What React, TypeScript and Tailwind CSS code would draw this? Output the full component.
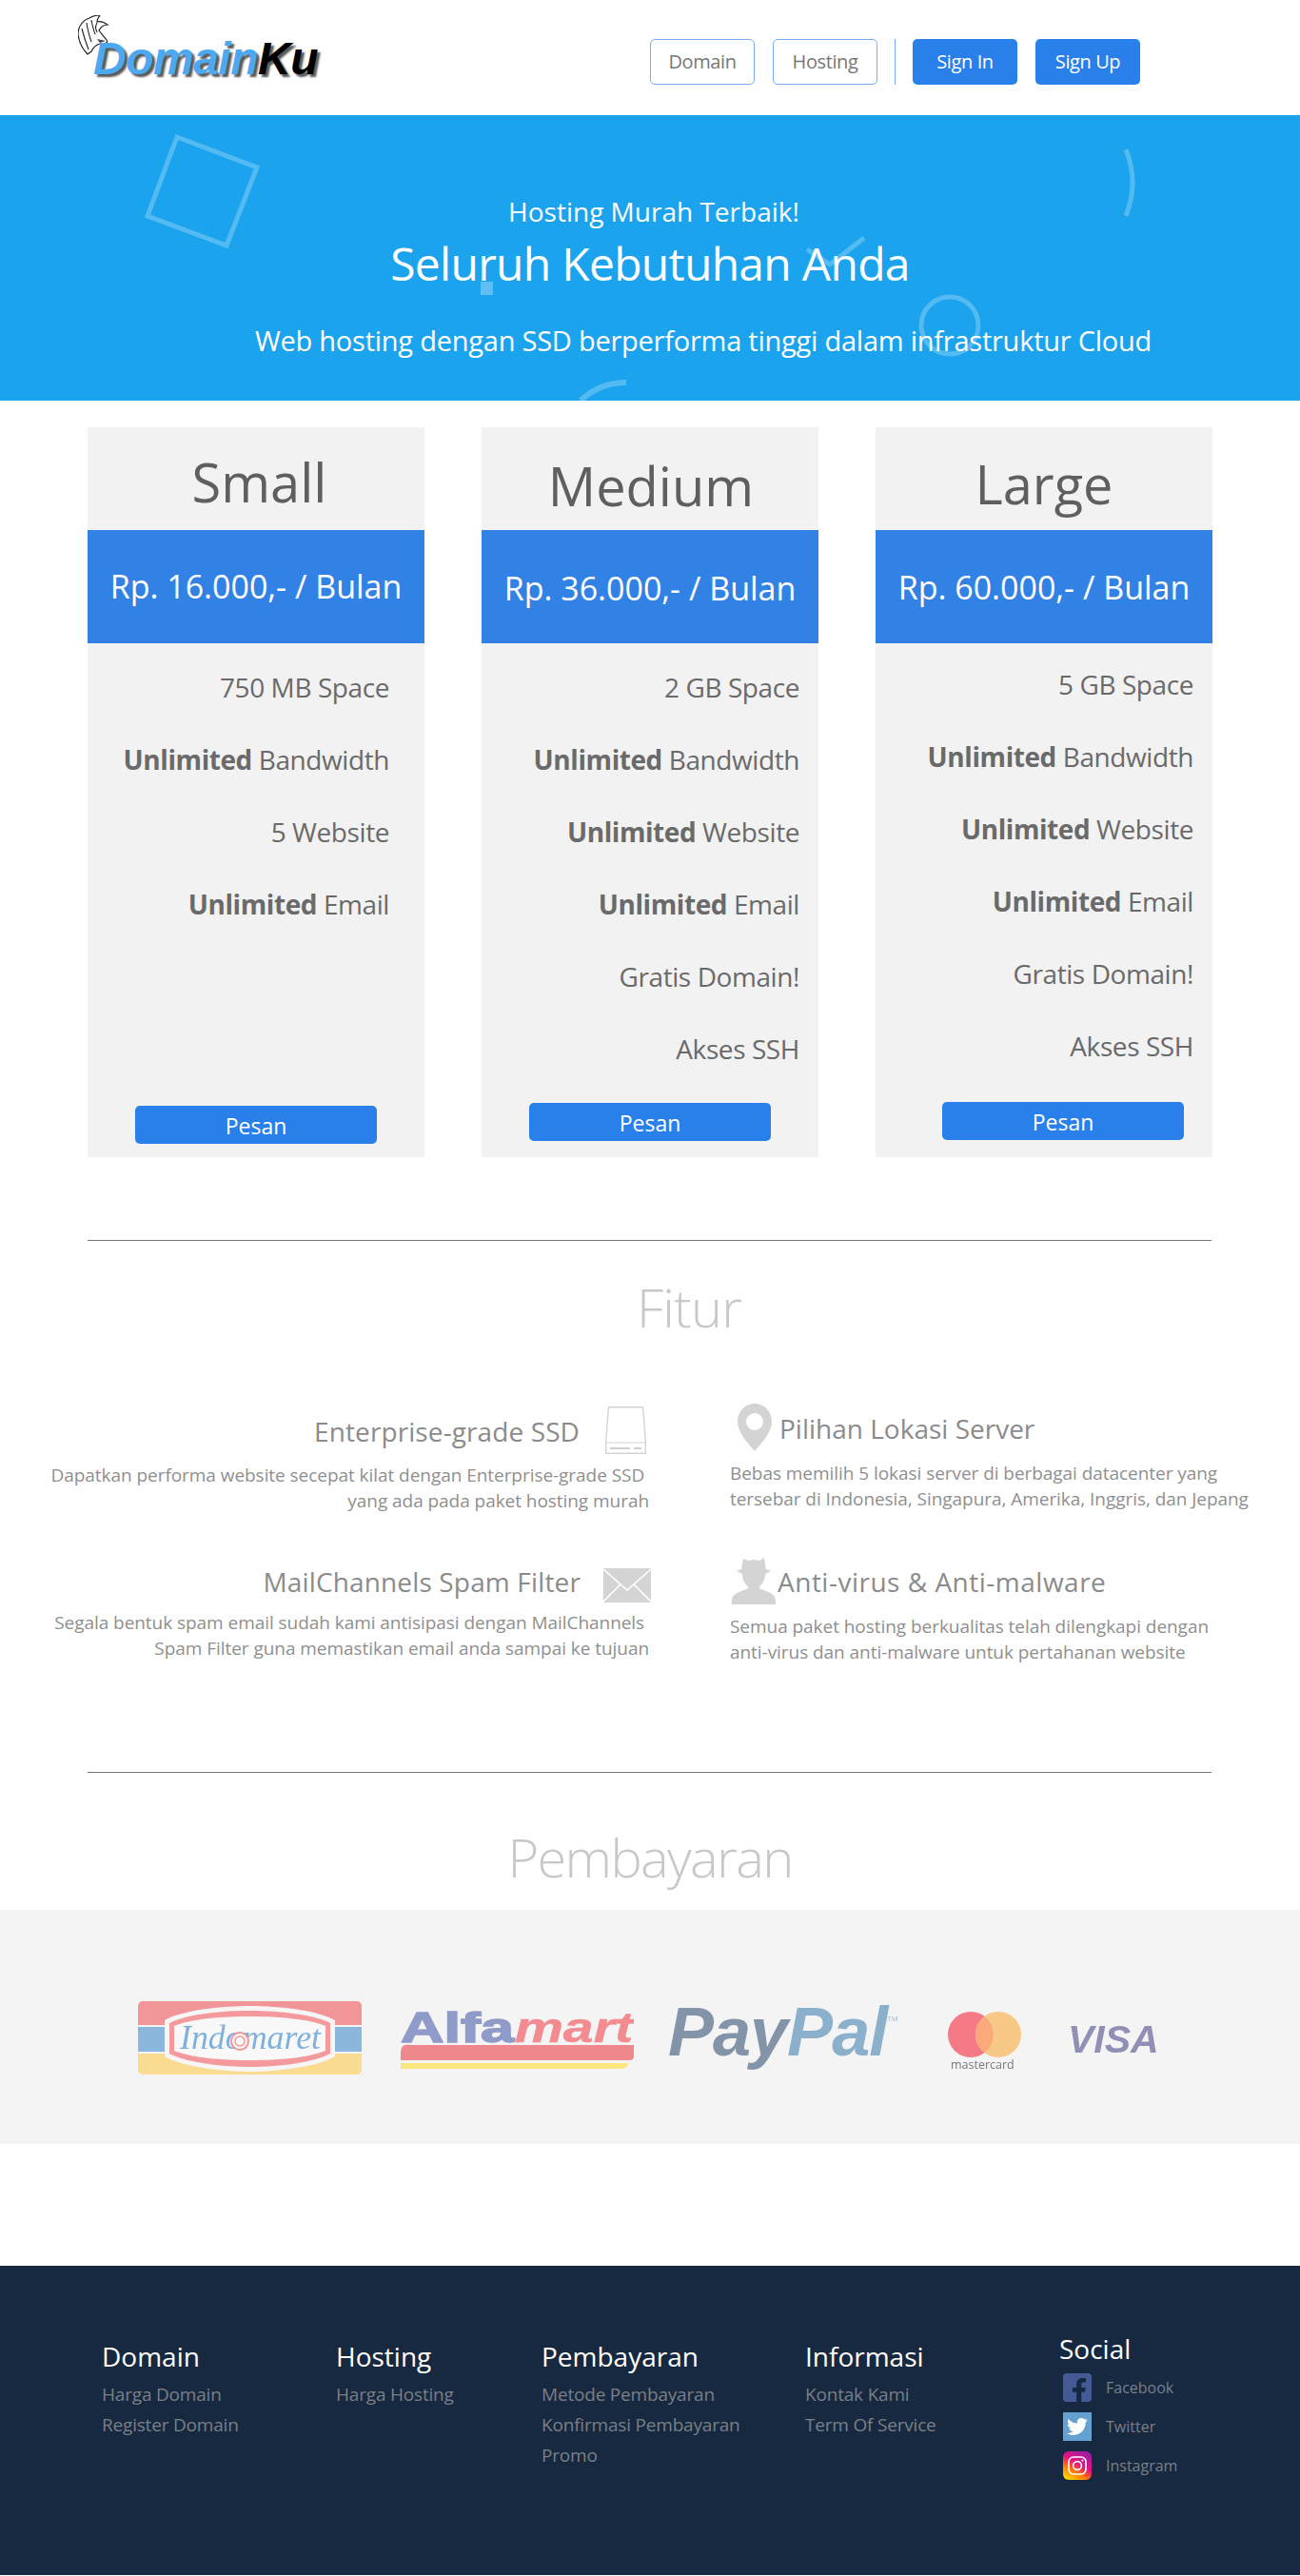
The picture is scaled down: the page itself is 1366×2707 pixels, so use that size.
import React from "react";
import { FaTwitter, FaFacebookF } from "react-icons/fa";

const btnOutline = "w-[110px] h-[48px] rounded-[5px] border border-[#78abf0] bg-white text-[#777777] text-[20px] tracking-[-0.02em] flex items-center justify-center";
const btnSolid = "w-[110px] h-[48px] rounded-[5px] bg-[#2a80ea] text-white text-[20px] tracking-[-0.02em] flex items-center justify-center";

function Logo() {
  return (
    <div className="relative w-[601px] h-[70px] shrink-0">
      <svg width="34" height="44" viewBox="0 0 34 44" className="absolute left-0 top-0">
        <path d="M10 41 C5 36 1 28 0 20 C0 12 5 5 12 3 C15 1 19 0 23 0 C21 3 20 5 20 7 C23 6 27 7 31 10 C27 10 24 12 22 16 C24 19 27 22 30 26 C32 29 28 31 23 30 C19 31 16 34 14 38 Z" fill="#ffffff" stroke="#222222" strokeWidth="1.2" />
        <path d="M4 14 C6 22 8 28 11 36 M9 8 C10 15 12 22 14 28 M14 5 C15 10 16 15 18 20 M20 8 C18 11 18 14 20 18" stroke="#222222" strokeWidth="1.1" fill="none" />
        <path d="M20 25 L29 27 L23 29 Z" fill="#444444" />
      </svg>
      <div className="absolute left-[16px] top-[22px] font-['Liberation_Sans',sans-serif] italic font-bold text-[48px] leading-[48px] tracking-[-0.5px] whitespace-nowrap [text-shadow:3px_3px_2px_rgba(0,0,0,0.65)]">
        <span className="text-[#4da8f2]">Domain</span>
        <span className="text-black">Ku</span>
      </div>
    </div>
  );
}

function Header() {
  return (
    <header className="h-[121px] bg-white flex items-start pl-[82px] pt-[16px]">
      <Logo />
      <nav className="flex items-stretch mt-[25px]">
        <a className={btnOutline}>Domain</a>
        <a className={`${btnOutline} ml-[19px]`}>Hosting</a>
        <div className="w-px bg-[#78abf0] ml-[18px] mr-[18px]" />
        <a className={btnSolid}>Sign In</a>
        <a className={`${btnSolid} ml-[19px]`}>Sign Up</a>
      </nav>
    </header>
  );
}

function HeroDeco() {
  return (
    <svg className="absolute left-0 top-0 w-[1366px] h-[300px] pointer-events-none" viewBox="0 121 1366 300">
      <g fill="none" stroke="#ffffff" strokeOpacity="0.25" strokeWidth="5">
        <polygon points="186,144 270,176 238,258 155,227" />
        <path d="M1183 157 Q1197 192 1183 227" />
        <circle cx="998" cy="342" r="30" />
        <path d="M848 262 L872 278 L908 250" />
        <path d="M610 421 Q630 402 658 402" strokeWidth="6" />
      </g>
      <rect x="505" y="296" width="13" height="14" fill="#ffffff" fillOpacity="0.3" />
    </svg>
  );
}

function Hero() {
  return (
    <section className="relative h-[300px] bg-[#1ba3ee] text-white overflow-hidden">
      <HeroDeco />
      <div className="relative flex flex-col items-center pt-[80px]">
        <p className="ml-[8px] text-[28px] leading-[42px]">Hosting Murah Terbaik!</p>
        <h1 className="mt-[4px] text-[48px] leading-[60px] tracking-[-0.015em]">Seluruh Kebutuhan Anda</h1>
        <p className="ml-[112px] mt-[30px] text-[29px] leading-[42px] tracking-[-0.24px] whitespace-nowrap">Web hosting dengan SSD berperforma tinggi dalam infrastruktur Cloud</p>
      </div>
    </section>
  );
}

type Feat = { b?: string; t: string };

function Card(props: {
  title: string; price: string; feats: Feat[];
  titleCls: string; priceCls: string; listCls: string; btnCls: string;
}) {
  return (
    <div className="w-[354px] h-[767px] bg-[#f2f2f2] flex flex-col">
      <h2 className={`h-[108px] shrink-0 text-center text-[56px] leading-[68px] text-[#5f5f5f] ${props.titleCls}`}>{props.title}</h2>
      <div className={`h-[119px] shrink-0 bg-[#3282e6] text-white text-center text-[34px] leading-[48px] ${props.priceCls}`}>{props.price}</div>
      <ul className={`flex-1 min-h-0 text-right text-[#6a6a6a] text-[28px] tracking-[-0.015em] ${props.listCls}`}>
        {props.feats.map((f, i) => (
          <li key={i} className="h-[76px] leading-[42px]">
            {f.b && <b className="font-bold">{f.b} </b>}
            {f.t}
          </li>
        ))}
      </ul>
      <a className={`shrink-0 w-[254px] h-[40px] rounded-[5px] bg-[#2a80ea] text-white text-[23px] leading-[43px] text-center ${props.btnCls}`}>Pesan</a>
    </div>
  );
}

const big: Feat[] = [
  { b: "Unlimited", t: "Bandwidth" },
  { b: "Unlimited", t: "Website" },
  { b: "Unlimited", t: "Email" },
  { t: "Gratis Domain!" },
  { t: "Akses SSH" },
];

function Pricing() {
  return (
    <section className="flex gap-[60px] pl-[92px] pt-[28px]">
      <Card title="Small" price="Rp. 16.000,- / Bulan"
        feats={[{ t: "750 MB Space" }, { b: "Unlimited", t: "Bandwidth" }, { t: "5 Website" }, { b: "Unlimited", t: "Email" }]}
        titleCls="pt-[23px] pl-[7px]" priceCls="pt-[35px]" listCls="pt-[25px] pr-[37px]" btnCls="ml-[50px] mb-[14px]" />
      <Card title="Medium" price="Rp. 36.000,- / Bulan"
        feats={[{ t: "2 GB Space" }, ...big]}
        titleCls="pt-[27px] pl-[2px]" priceCls="pt-[37px]" listCls="pt-[25px] pr-[20px]" btnCls="ml-[50px] mb-[17px]" />
      <Card title="Large" price="Rp. 60.000,- / Bulan"
        feats={[{ t: "5 GB Space" }, ...big]}
        titleCls="pt-[25px]" priceCls="pt-[36px]" listCls="pt-[22px] pr-[20px]" btnCls="ml-[70px] mb-[18px]" />
    </section>
  );
}

const IconSsd = () => (
  <svg width="43" height="50" viewBox="0 0 43 50" className="shrink-0">
    <path d="M3.5 .8 H39.5 L42.3 36 V49.3 H.7 V36 Z" fill="#ffffff" stroke="#d4d4d4" strokeWidth="1.4" />
    <path d="M.7 38 H42.3" stroke="#d4d4d4" strokeWidth="1.2" />
    <path d="M5 44 H26 M30 44 H38" stroke="#cfcfcf" strokeWidth="2" />
  </svg>
);
const IconMail = () => (
  <svg width="50" height="36" viewBox="0 0 50 36" className="shrink-0">
    <rect width="50" height="36" rx="1" fill="#d4d4d4" />
    <path d="M0 1 L25 23 L50 1 M0 35 L18 17 M50 35 L32 17" stroke="#ffffff" strokeWidth="1.6" fill="none" />
  </svg>
);
const IconPin = () => (
  <svg width="38" height="50" viewBox="0 0 38 50" className="shrink-0">
    <path fillRule="evenodd" d="M19 0 C29 0 37 8 37 19 C37 30 26 42 19 50 C12 42 1 30 1 19 C1 8 9 0 19 0 Z M19 10 A9 9 0 1 0 19 28 A9 9 0 1 0 19 10 Z" fill="#d4d4d4" />
  </svg>
);
const IconSpy = () => (
  <svg width="46" height="50" viewBox="0 0 46 50" className="shrink-0">
    <path d="M12 2 L17 4 L23 3 L29 4 L34 1 L36 13 L41 15 L35 18 C35 24 32 29 29 31 V33 C33 36 46 37 46 46 V50 H0 V46 C0 37 13 36 17 33 V31 C14 29 11 24 11 18 L5 15 L10 13 Z" fill="#d4d4d4" />
  </svg>
);

function Features() {
  const heading = "text-[28px] leading-[42px] text-[#8b8b8b] whitespace-nowrap";
  const desc = "text-[19px] leading-[27px] text-[#8f8f8f] tracking-[-0.05px] whitespace-nowrap";
  return (
    <section>
      <div className="h-px bg-[#777777] ml-[92px] mr-[93px] mt-[87px]" />
      <h2 className="ml-[82px] text-center text-[56px] leading-[84px] text-[#c8c8c8] font-light tracking-[-0.015em] mt-[27px]">Fitur</h2>
      <div className="flex mt-[63px]">
        <div className="w-[684px] shrink-0 flex flex-col items-end text-right pr-[2px]">
          <div className="flex items-start h-[54px]">
            <h3 className={`${heading} mt-[5px] tracking-[0.1px]`}>Enterprise-grade SSD</h3>
            <div className="ml-[27px] mr-[3px]"><IconSsd /></div>
          </div>
          <p className={`${desc} mt-[5px]`}>Dapatkan performa website secepat kilat dengan Enterprise-grade SSD&nbsp;<br />yang ada pada paket hosting murah</p>
          <div className="flex items-start mt-[50px] h-[46px]">
            <h3 className={`${heading} tracking-[0.15px]`}>MailChannels Spam Filter</h3>
            <div className="ml-[24px] mt-[7px] mr-[-2px]"><IconMail /></div>
          </div>
          <p className={`${desc} mt-[5px]`}>Segala bentuk spam email sudah kami antisipasi dengan MailChannels&nbsp;<br />Spam Filter guna memastikan email anda sampai ke tujuan</p>
        </div>
        <div className="pl-[83px] flex flex-col -mt-[3px]">
          <div className="flex items-start">
            <div className="ml-[7px] mr-[7px]"><IconPin /></div>
            <h3 className={`${heading} mt-[5px]`}>Pilihan Lokasi Server</h3>
          </div>
          <p className={`${desc} mt-[10px]`}>Bebas memilih 5 lokasi server di berbagai datacenter yang<br />tersebar di Indonesia, Singapura, Amerika, Inggris, dan Jepang</p>
          <div className="flex items-start mt-[47px]">
            <div className="ml-[2px] mr-[2px]"><IconSpy /></div>
            <h3 className={`${heading} mt-[5px] tracking-[0.5px]`}>Anti-virus &amp; Anti-malware</h3>
          </div>
          <p className={`${desc} mt-[10px]`}>Semua paket hosting berkualitas telah dilengkapi dengan<br />anti-virus dan anti-malware untuk pertahanan website</p>
        </div>
      </div>
      <div className="h-px bg-[#777777] ml-[92px] mr-[93px] mt-[112px]" />
      <h2 className="text-center text-[56px] leading-[84px] text-[#c8c8c8] font-light tracking-[-0.03em] mt-[46px] mb-[14px]">Pembayaran</h2>
    </section>
  );
}

const Indomaret = () => (
  <svg width="235" height="78" viewBox="0 0 235 78" className="shrink-0">
    <path d="M5 0 H230 A5 5 0 0 1 235 5 V25 H0 V5 A5 5 0 0 1 5 0 Z" fill="#f29598" />
    <rect y="27" width="235" height="26" fill="#8bb7dc" />
    <path d="M0 55 H235 V72 A5 5 0 0 1 230 77 H5 A5 5 0 0 1 0 72 Z" fill="#f9dc92" />
    <path d="M28 20 C45 10 85 5 118 5 C150 5 190 10 207 20 Q207 38 207 58 C190 68 150 74 118 74 C85 74 45 68 28 58 Q28 38 28 20 Z" fill="#f6f6f6" />
    <path d="M33 23 C50 14 85 10 118 10 C150 10 185 14 202 23 V55 C185 64 150 69 118 69 C85 69 50 64 33 55 Z" fill="#f49a9d" />
    <path d="M38 26 C55 19 85 16 118 16 C150 16 180 19 197 26 V52 C180 59 150 62 118 62 C85 62 55 59 38 52 Z" fill="#f8f8f8" />
    <text x="44" y="50" className="font-['Liberation_Serif',serif] italic" fontSize="36" fill="#7fb1dc" textLength="148" lengthAdjust="spacingAndGlyphs">Indomaret</text>
    <circle cx="107" cy="42" r="9" fill="#f8f8f8" stroke="#f29598" strokeWidth="2" />
    <circle cx="107" cy="42" r="5" fill="none" stroke="#f29598" strokeWidth="1.5" />
  </svg>
);
const Alfamart = () => (
  <svg width="245" height="78" viewBox="0 0 245 78" className="shrink-0">
    <text x="0" y="44" className="font-['Liberation_Sans',sans-serif] font-bold" fontSize="44" fill="#8f9bc9" stroke="#8f9bc9" strokeWidth="1.5" textLength="119" lengthAdjust="spacingAndGlyphs">Alfa</text>
    <text x="120" y="44" className="font-['Liberation_Sans',sans-serif] font-bold italic" fontSize="44" fill="#f38b90" stroke="#f38b90" strokeWidth="0.5" textLength="124" lengthAdjust="spacingAndGlyphs">mart</text>
    <path d="M0 55 C1 44 6 47 18 47 H245 V59 Q245 63 240 63 H0 Z" fill="#ee888d" />
    <path d="M0 66 H240 Q238 72 230 72 H0 Z" fill="#fbe77f" />
  </svg>
);
const PayPal = () => (
  <svg width="246" height="92" viewBox="0 0 246 92" className="shrink-0">
    <text x="0" y="70" className="font-['Liberation_Sans',sans-serif] font-bold italic" fontSize="72" letterSpacing="-1">
      <tspan fill="#8494a8">Pay</tspan><tspan fill="#8bb0cc">Pal</tspan>
    </text>
    <text x="230" y="34" fontSize="8" className="font-['Liberation_Sans',sans-serif]" fill="#a9c0d4">TM</text>
  </svg>
);
const Mastercard = () => (
  <svg width="78" height="72" viewBox="0 0 78 72" className="shrink-0">
    <circle cx="24" cy="24" r="24" fill="#f47a88" />
    <circle cx="53" cy="24" r="24" fill="#f8c986" />
    <path d="M38.5 5 A24 24 0 0 1 38.5 43 A24 24 0 0 1 38.5 5 Z" fill="#fba97a" />
    <text x="3" y="60" fontSize="12.5" className="font-['Open_Sans',sans-serif]" fill="#777777">mastercard</text>
  </svg>
);
const Visa = () => (
  <svg width="102" height="56" viewBox="0 0 102 56" className="shrink-0">
    <text x="0" y="40" className="font-['Liberation_Sans',sans-serif] font-bold italic" fontSize="41" fill="#908fb5">VISA</text>
  </svg>
);

function Payments() {
  return (
    <section className="h-[246px] bg-[#f4f4f4] flex items-start pl-[145px]">
      <div className="flex items-start pt-[96px] blur-[0.4px]">
        <Indomaret />
        <div className="ml-[41px] -mt-[1px]"><Alfamart /></div>
        <div className="ml-[36px] -mt-[13px]"><PayPal /></div>
        <div className="ml-[48px] mt-[11px]"><Mastercard /></div>
        <div className="ml-[48px] mt-[14px]"><Visa /></div>
      </div>
    </section>
  );
}

function FootCol({ title, links, cls }: { title: string; links: string[]; cls: string }) {
  return (
    <div className={cls}>
      <h4 className="text-[28px] leading-[42px] text-white">{title}</h4>
      <ul className="mt-[3px]">
        {links.map((l) => (
          <li key={l} className="text-[19px] leading-[32px] text-[#7a7f86] tracking-[-0.01em] whitespace-nowrap">{l}</li>
        ))}
      </ul>
    </div>
  );
}

const Fb = () => (
  <div className="w-[30px] h-[30px] rounded-[4px] bg-[#435a95] flex items-end justify-center overflow-hidden">
    <FaFacebookF className="text-[#172940] w-[24px] h-[26px] ml-[4px] mb-[-1px]" />
  </div>
);
const Tw = () => (
  <div className="w-[30px] h-[30px] bg-[#64a0d0] flex items-center justify-center">
    <FaTwitter className="text-white w-[22px] h-[22px]" />
  </div>
);
const Ig = () => (
  <svg width="30" height="30" viewBox="0 0 30 30">
    <defs>
      <linearGradient id="ig" x1="0.2" y1="1" x2="0.8" y2="0">
        <stop offset="0" stopColor="#ffd600" />
        <stop offset="0.3" stopColor="#ff7a00" />
        <stop offset="0.55" stopColor="#e8127f" />
        <stop offset="1" stopColor="#9a1ea8" />
      </linearGradient>
    </defs>
    <rect width="30" height="30" rx="6" fill="url(#ig)" />
    <rect x="6" y="6" width="18" height="18" rx="5" fill="none" stroke="#fff" strokeWidth="1.6" />
    <circle cx="15" cy="15" r="4.4" fill="none" stroke="#fff" strokeWidth="1.6" />
    <circle cx="20.4" cy="9.6" r="1.1" fill="#fff" />
  </svg>
);

function Footer() {
  const socials: [React.ReactNode, string][] = [[<Fb />, "Facebook"], [<Tw />, "Twitter"], [<Ig />, "Instagram"]];
  return (
    <footer className="h-[325px] bg-[#172940] flex items-start pl-[107px] pt-[74px] mt-[128px]">
      <FootCol cls="w-[246px] shrink-0" title="Domain" links={["Harga Domain", "Register Domain"]} />
      <FootCol cls="w-[216px] shrink-0" title="Hosting" links={["Harga Hosting"]} />
      <FootCol cls="w-[277px] shrink-0" title="Pembayaran" links={["Metode Pembayaran", "Konfirmasi Pembayaran", "Promo"]} />
      <FootCol cls="w-[267px] shrink-0" title="Informasi" links={["Kontak Kami", "Term Of Service"]} />
      <div className="mt-[-8px]">
        <h4 className="text-[28px] leading-[42px] text-white">Social</h4>
        <ul className="pl-[4px] flex flex-col gap-[11px] mt-[5px]">
          {socials.map(([icon, label]) => (
            <li key={label} className="flex items-center h-[30px]">
              {icon}
              <span className="ml-[15px] text-[16px] text-[#7a7f86]">{label}</span>
            </li>
          ))}
        </ul>
      </div>
    </footer>
  );
}

export default function App() {
  return (
    <div className="w-[1366px] bg-white font-['Open_Sans',sans-serif]">
      <Header />
      <Hero />
      <Pricing />
      <Features />
      <Payments />
      <Footer />
    </div>
  );
}
